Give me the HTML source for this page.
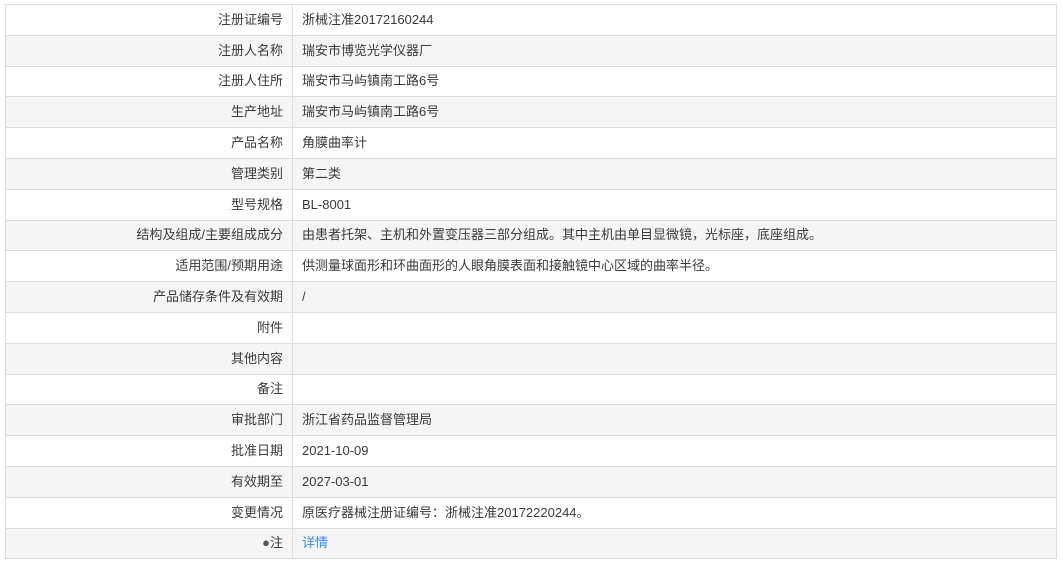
<!DOCTYPE html>
<html><head><meta charset="utf-8"><style>
body{margin:0;background:#fff;font-family:"Liberation Sans","Noto Sans CJK SC",sans-serif;font-size:13px;color:#3a3a3a;}
table{position:absolute;left:5px;top:4px;width:1052px;border-collapse:collapse;table-layout:fixed}
td{border:1px solid #dcdcdc;height:29.8px;padding:0;line-height:16px}
td.l{width:277px;text-align:right;padding-right:9px}
td.v{padding-left:9px}
tr:nth-child(even) td{background:#f5f5f5}
a{color:#3b8de0;text-decoration:none}
</style></head><body>
<table>
<tr><td class="l">注册证编号</td><td class="v">浙械注准20172160244</td></tr>
<tr><td class="l">注册人名称</td><td class="v">瑞安市博览光学仪器厂</td></tr>
<tr><td class="l">注册人住所</td><td class="v">瑞安市马屿镇南工路6号</td></tr>
<tr><td class="l">生产地址</td><td class="v">瑞安市马屿镇南工路6号</td></tr>
<tr><td class="l">产品名称</td><td class="v">角膜曲率计</td></tr>
<tr><td class="l">管理类别</td><td class="v">第二类</td></tr>
<tr><td class="l">型号规格</td><td class="v">BL-8001</td></tr>
<tr><td class="l">结构及组成/主要组成成分</td><td class="v">由患者托架、主机和外置变压器三部分组成。其中主机由单目显微镜，光标座，底座组成。</td></tr>
<tr><td class="l">适用范围/预期用途</td><td class="v">供测量球面形和环曲面形的人眼角膜表面和接触镜中心区域的曲率半径。</td></tr>
<tr><td class="l">产品储存条件及有效期</td><td class="v">/</td></tr>
<tr><td class="l">附件</td><td class="v"></td></tr>
<tr><td class="l">其他内容</td><td class="v"></td></tr>
<tr><td class="l">备注</td><td class="v"></td></tr>
<tr><td class="l">审批部门</td><td class="v">浙江省药品监督管理局</td></tr>
<tr><td class="l">批准日期</td><td class="v">2021-10-09</td></tr>
<tr><td class="l">有效期至</td><td class="v">2027-03-01</td></tr>
<tr><td class="l">变更情况</td><td class="v">原医疗器械注册证编号：浙械注准20172220244。</td></tr>
<tr><td class="l"><span style="font-size:13px;color:#555">●</span>注</td><td class="v"><a>详情</a></td></tr>
</table>
</body></html>
